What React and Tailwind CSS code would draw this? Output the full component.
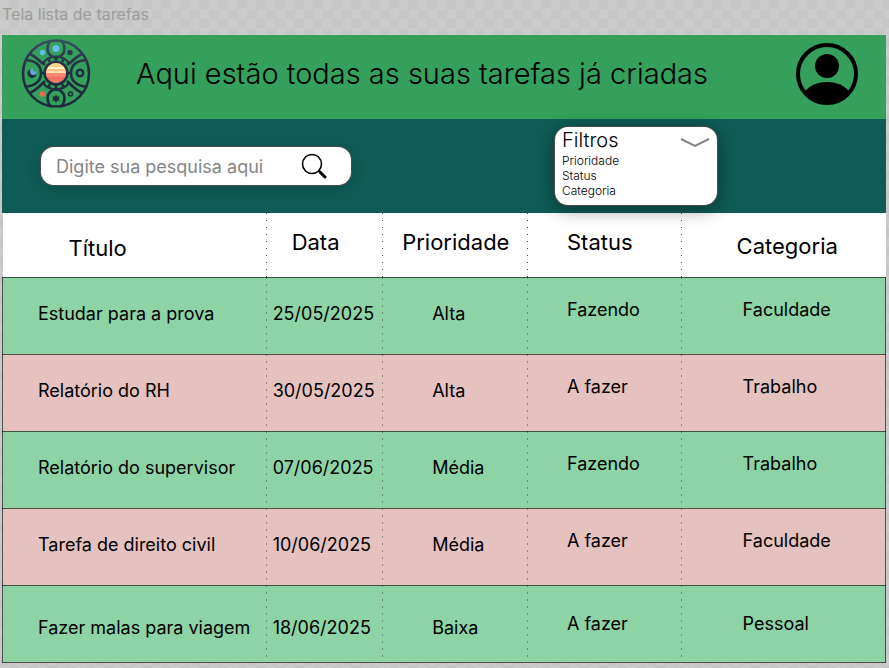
import React from "react";

const tasks = [
  ["Estudar para a prova", "25/05/2025", "Alta", "Fazendo", "Faculdade"],
  ["Relatório do RH", "30/05/2025", "Alta", "A fazer", "Trabalho"],
  ["Relatório do supervisor", "07/06/2025", "Média", "Fazendo", "Trabalho"],
  ["Tarefa de direito civil", "10/06/2025", "Média", "A fazer", "Faculdade"],
  ["Fazer malas para viagem", "18/06/2025", "Baixa", "A fazer", "Pessoal"],
];

const dotted =
  "bg-[linear-gradient(#444_1px,transparent_1px)] bg-[length:1px_7px] bg-repeat-y bg-left-top";

const columns = [
  { name: "Título", width: "w-[29.8%]", head: "pl-[66px] pt-2", cell: "pl-[35px]" },
  { name: "Data", width: "w-[13.2%]", head: "pl-[26px] pb-1 " + dotted, cell: "pl-[7px] " + dotted },
  { name: "Prioridade", width: "w-[16.4%]", head: "pl-5 pb-1 " + dotted, cell: "pl-[50px] " + dotted },
  { name: "Status", width: "w-[17.4%]", head: "pl-10 pb-1 " + dotted, cell: "pl-10 " + dotted },
  { name: "Categoria", width: "w-auto", head: "pl-14 pt-1 " + dotted, cell: "pl-[62px] " + dotted },
];

function Logo() {
  return (
    <svg viewBox="0 0 80 80" className="size-20 shrink-0" aria-label="Logo" role="img">
      <defs>
        <clipPath id="sun"><circle cx="40" cy="39" r="10" /></clipPath>
        <linearGradient id="ink" gradientUnits="userSpaceOnUse" x1="0" y1="5" x2="0" y2="75">
          <stop offset="0" stopColor="#3d4f5d" />
          <stop offset="0.4" stopColor="#213142" />
          <stop offset="1" stopColor="#1c2b3a" />
        </linearGradient>
      </defs>
      <g fill="none" stroke="url(#ink)" strokeWidth="2.6">
        <circle cx="40" cy="39.5" r="33" />
        <circle cx="40" cy="39" r="11.3" />
        <path d="M27 29A16.500 16.500 0 0 1 53 29M27 49A16.500 16.500 0 0 0 53 49" strokeWidth="2.2" />
        <path d="M29 31L26 28M34 28L32 24M40 27V23M46 28L48 24M51 31L54 28M29 47L26 50M34 50L32 54M40 51V55M46 50L48 54M51 47L54 50" strokeWidth="2.6" />
        <path d="M36 6Q31.500 9 31.500 15A8.500 8.500 0 0 0 48.500 15Q48.500 9 44 6" />
        <path d="M36 73Q31.500 70 31.500 64A8.500 8.500 0 0 1 48.500 64Q48.500 70 44 73" />
        <path d="M9 26Q25 27 25 39T9 53M71 26Q55 27 55 39T71 53" />
        <path d="M14 20Q20 23 27 30M66 20Q60 23 53 30M14 59Q20 56 27 49M66 59Q60 56 53 49" />
        <path d="M24 39H30M50 39H56" />
        <circle cx="64" cy="39" r="3.2" />
        <circle cx="54.5" cy="60" r="2" strokeWidth="1.6" />
      </g>
      <circle cx="26.5" cy="18.500" r="2.7" fill="#64bfe6" />
      <circle cx="40" cy="14.500" r="3.600" fill="#64bfe6" />
      <circle cx="54" cy="18.500" r="2.7" fill="#2c3d4b" />
      <circle cx="26.5" cy="60" r="2.7" fill="#ee6c55" />
      <circle cx="16" cy="39.5" r="4.500" fill="#213142" />
      <circle cx="17.500" cy="37.500" r="3.4" fill="#64a9dc" />
      <circle cx="19" cy="35.500" r="2.2" fill="#34a05c" />
      <path
        d="M40 60.500L41.300 62.700L43.900 62.300L42.600 64.500L43.900 66.800L41.300 66.600L40 69L38.700 66.600L36.100 66.800L37.400 64.500L36.100 62.300L38.700 62.700Z"
        fill="#1c2b3a"
      />
      <g clipPath="url(#sun)">
        <rect x="30" y="29" width="20" height="20" fill="#f9776b" />
        <rect x="30" y="29" width="20" height="4" fill="#fbd391" />
        <rect x="30" y="33" width="20" height="2" fill="#fff0c2" />
        <rect x="30" y="35" width="20" height="2" fill="#fbc08a" />
        <rect x="30" y="37" width="20" height="2" fill="#fddcae" />
        <rect x="30" y="39" width="20" height="3" fill="#f98b70" />
        <rect x="30" y="44" width="20" height="1" fill="#e8655f" />
      </g>
    </svg>
  );
}

export default function App() {
  return (
    <div className="min-h-screen bg-[repeating-conic-gradient(#c6c6c6_0_25%,#cbcbcb_0_50%)] bg-[length:19px_19px] pl-[2px] pr-[3px] pb-1 font-[Inter,'Liberation_Sans',sans-serif] text-black">
      <p className="h-[35px] pt-1 text-[16px] leading-5 text-[#9d9d9d]">Tela lista de tarefas</p>
      <main>
        <header className="flex h-[84px] items-center bg-[#34a05c] pr-7 pb-[6px] pl-[14px]">
          <Logo />
          <h1 className="flex-1 pl-10 text-[29px] font-light whitespace-nowrap">
            Aqui estão todas as suas tarefas já criadas
          </h1>
          <button aria-label="Perfil" type="button">
            <svg viewBox="0 0 62 62" className="size-[62px]">
              <circle cx="31" cy="31" r="29" fill="none" stroke="#000" strokeWidth="4" />
              <circle cx="31" cy="23" r="12" />
              <path d="M9 48Q17 39 31 39T53 48Q44 60 31 60T9 48Z" />
            </svg>
          </button>
        </header>
        <section className="flex h-[94px] items-center justify-between bg-[#0e5c55] pr-[168px] pl-[38px]">
          <form className="flex h-10 w-[312px] items-center rounded-[14px] border border-black/70 bg-white pr-6 pl-[15px] shadow-[0_4px_16px_rgba(0,0,0,0.15)]">
            <input
              aria-label="Pesquisa"
              type="search"
              placeholder="Digite sua pesquisa aqui"
              className="min-w-0 flex-1 text-[18px] outline-none placeholder:text-[#858585]"
            />
            <button aria-label="Pesquisar" type="button">
              <svg viewBox="0 0 26 26" className="size-[26px]" fill="none" stroke="#000">
                <circle cx="11" cy="11" r="9.5" strokeWidth="1.6" />
                <path d="M17.500 17.500L19 19" strokeWidth="2" />
                <path d="M19 19L24 24" strokeWidth="3" strokeLinecap="round" />
              </svg>
            </button>
          </form>
          <div className="relative z-10 h-20 w-[164px] rounded-[14px] border border-black/70 bg-white px-[7px] pt-px shadow-[0_4px_18px_rgba(0,0,0,0.4)]">
            <button
              type="button"
              className="flex w-full items-center justify-between text-[20px] leading-[25px] font-light"
            >
              Filtros
              <svg viewBox="0 0 30 10" className="mt-1 h-[10px] w-[30px]" fill="none" stroke="#858585" strokeWidth="2">
                <path d="M1 1L15 8L29 1" />
              </svg>
            </button>
            <ul className="text-[12px] leading-[15px] font-light">
              {["Prioridade", "Status", "Categoria"].map((f) => (
                <li key={f}>
                  <button type="button" className="block">{f}</button>
                </li>
              ))}
            </ul>
          </div>
        </section>
        <table className="w-full table-fixed border-collapse text-left">
          <thead>
            <tr className="h-16 bg-white">
              {columns.map((c) => (
                <th key={c.name} scope="col" className={`${c.width} ${c.head} text-[22px] font-normal`}>
                  {c.name}
                </th>
              ))}
            </tr>
          </thead>
          <tbody>
            {tasks.map((task, row) => {
              const last = row === tasks.length - 1;
              return (
                <tr key={task[0]} className="h-[77px] border border-black/60 odd:bg-[#8dd3a5] even:bg-[#e5c1bf]">
                  {task.map((value, i) => {
                    const top = i < 3 ? (last ? "pt-7" : "pt-[22px]") : last ? "pt-6" : "pt-[18px]";
                    return (
                      <td key={columns[i].name} className={`${columns[i].cell} ${top} align-top text-[18px] leading-7 whitespace-nowrap`}>
                        {value}
                      </td>
                    );
                  })}
                </tr>
              );
            })}
          </tbody>
        </table>
      </main>
    </div>
  );
}
